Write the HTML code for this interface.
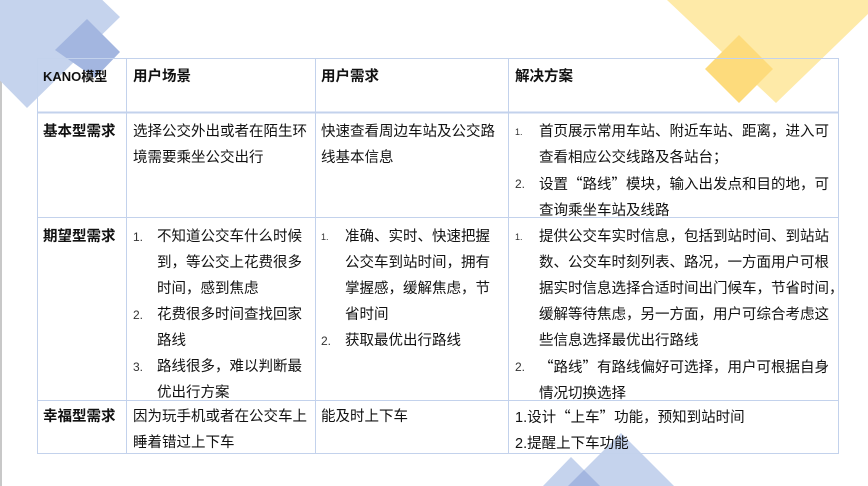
<!DOCTYPE html>
<html><head><meta charset="utf-8"><style>
body{margin:0;width:868px;height:486px;overflow:hidden;background:#fff;position:relative;font-family:"Liberation Sans","Noto Sans CJK SC","WenQuanYi Zen Hei",sans-serif;color:#111}
svg{position:absolute;left:0;top:0}
.t{position:absolute;font-size:14.5px;line-height:26px;white-space:nowrap}
.b{font-weight:bold}
.n{position:absolute;font-size:12px;line-height:26px;color:#333}
.s{font-size:9px}
.q{font-family:"Noto Sans CJK SC",sans-serif}
</style></head><body>
<svg width="868" height="486">
<rect x="0" y="0" width="2" height="486" fill="#c8c8c8"/>
<polygon points="120,17 27,108 -40,40 40,-60" fill="#c5d3ed"/>
<polygon points="87,19 120,52 95,78 55,50" fill="#a3b6e0"/>
<polygon points="667,0 868,0 868,14 776,103" fill="#feeaa8"/>
<polygon points="739,35 773,69 739,103 705,69" fill="#fddb7c"/>
<polygon points="543,486 571,457 600,486" fill="#c5d3ed"/>
<polygon points="568,486 621,433 674,486" fill="#c5d3ed"/>
<polygon points="568,486 584,470 600,486" fill="#a3b6e0"/>
<g stroke="#c3d2ec" stroke-width="1" fill="none">
<rect x="37.5" y="58.5" width="801" height="395"/>
<line x1="37" y1="112.5" x2="839" y2="112.5" stroke-width="2"/>
<line x1="37" y1="217.5" x2="839" y2="217.5"/>
<line x1="37" y1="400.5" x2="839" y2="400.5"/>
<line x1="126.5" y1="58" x2="126.5" y2="454"/>
<line x1="315.5" y1="58" x2="315.5" y2="454"/>
<line x1="508.5" y1="58" x2="508.5" y2="454"/>
</g>
</svg>
<div class="t b" style="left:43px;top:64px;font-size:13px">KANO模型</div>
<div class="t b" style="left:133px;top:64px">用户场景</div>
<div class="t b" style="left:321px;top:64px">用户需求</div>
<div class="t b" style="left:515px;top:64px">解决方案</div>

<div class="t b" style="left:43px;top:119px">基本型需求</div>
<div class="t" style="left:133px;top:119px">选择公交外出或者在陌生环<br>境需要乘坐公交出行</div>
<div class="t" style="left:321px;top:119px">快速查看周边车站及公交路<br>线基本信息</div>
<div class="n s" style="left:515px;top:119px">1.</div>
<div class="n" style="left:515px;top:171px">2.</div>
<div class="t" style="left:539px;top:119px">首页展示常用车站、附近车站、距离，进入可<br>查看相应公交线路及各站台；<br>设置<span class="q">“</span>路线<span class="q">”</span>模块，输入出发点和目的地，可<br>查询乘坐车站及线路</div>

<div class="t b" style="left:43px;top:224px">期望型需求</div>
<div class="n" style="left:133px;top:224px">1.</div>
<div class="n" style="left:133px;top:302px">2.</div>
<div class="n" style="left:133px;top:354px">3.</div>
<div class="t" style="left:157px;top:224px">不知道公交车什么时候<br>到，等公交上花费很多<br>时间，感到焦虑<br>花费很多时间查找回家<br>路线<br>路线很多，难以判断最<br>优出行方案</div>
<div class="n s" style="left:321px;top:224px">1.</div>
<div class="n" style="left:321px;top:328px">2.</div>
<div class="t" style="left:345px;top:224px">准确、实时、快速把握<br>公交车到站时间，拥有<br>掌握感，缓解焦虑，节<br>省时间<br>获取最优出行路线</div>
<div class="n s" style="left:515px;top:224px">1.</div>
<div class="n" style="left:515px;top:354px">2.</div>
<div class="t" style="left:539px;top:224px">提供公交车实时信息，包括到站时间、到站站<br>数、公交车时刻列表、路况，一方面用户可根<br>据实时信息选择合适时间出门候车，节省时间，<br>缓解等待焦虑，另一方面，用户可综合考虑这<br>些信息选择最优出行路线<br><span class="q">“</span>路线<span class="q">”</span>有路线偏好可选择，用户可根据自身<br>情况切换选择</div>

<div class="t b" style="left:43px;top:404px">幸福型需求</div>
<div class="t" style="left:133px;top:404px">因为玩手机或者在公交车上<br>睡着错过上下车</div>
<div class="t" style="left:321px;top:404px">能及时上下车</div>
<div class="t" style="left:515px;top:404px">1.设计<span class="q">“</span>上车<span class="q">”</span>功能，预知到站时间<br>2.提醒上下车功能</div>
</body></html>
